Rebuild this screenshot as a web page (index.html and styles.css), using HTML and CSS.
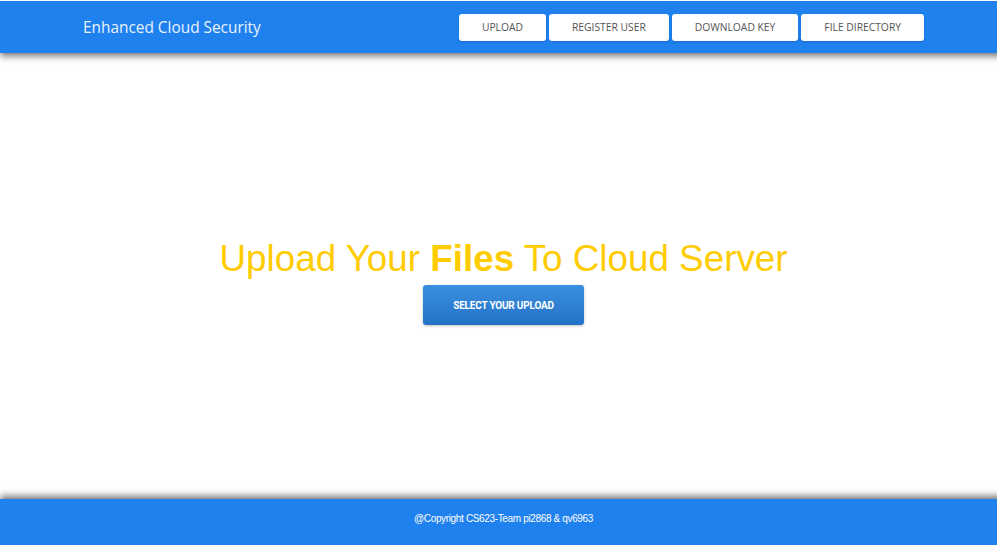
FILE: index.html
```html
<!DOCTYPE html>
<html lang="en">
<head>
<meta charset="utf-8">
<title>Enhanced Cloud Security</title>
<link rel="stylesheet" href="styles.css">
</head>
<body>
<div class="page">
  <header class="topbar">
    <div class="brand">Enhanced Cloud Security</div>
    <nav class="nav">
      <a class="nav-btn" href="#">Upload</a>
      <a class="nav-btn" href="#">Register User</a>
      <a class="nav-btn" href="#">Download Key</a>
      <a class="nav-btn" href="#">File Directory</a>
    </nav>
  </header>
  <main class="hero">
    <h1 class="hero-title">Upload Your <b>Files</b> To Cloud Server</h1>
    <button class="select-btn" type="button">SELECT YOUR UPLOAD</button>
  </main>
  <footer class="footer">@Copyright CS623-Team pi2868 &amp; qv6963</footer>
</div>
</body>
</html>
```
FILE: styles.css
```css
* { box-sizing: border-box; }
html, body { margin: 0; padding: 0; background: #fff; overflow: hidden; }
body { padding-top: 1px; }
.page {
  width: 1007px;
  height: 544px;
  display: flex;
  flex-direction: column;
  overflow: hidden;
}
.topbar {
  position: relative;
  z-index: 2;
  height: 52px;
  flex: none;
  background: #1f81ee;
  box-shadow: 0 3px 7px rgba(0,0,0,0.55);
  display: flex;
  align-items: center;
  justify-content: space-between;
  padding: 0 83px;
}
.brand {
  font-family: "Open Sans", sans-serif;
  font-size: 15.4px;
  color: #eaf2fd;
}
.nav { display: flex; gap: 3px; }
.nav-btn {
  display: flex;
  align-items: center;
  height: 27px;
  padding: 0 23px;
  background: #fff;
  border-radius: 3px;
  color: #555;
  font-family: "Open Sans", sans-serif;
  font-size: 10.3px;
  text-transform: uppercase;
  text-decoration: none;
  box-shadow: 0 1px 2px rgba(0,0,0,0.15);
}
.hero {
  flex: 1;
  display: flex;
  flex-direction: column;
  align-items: center;
  justify-content: center;
  padding-top: 12px;
}
.hero-title {
  margin: 0;
  font-family: "Liberation Sans", Arial, sans-serif;
  font-size: 36.8px;
  line-height: 40px;
  font-weight: normal;
  color: #ffcc00;
}
.hero-title b { font-weight: bold; }
.select-btn {
  margin-top: 6px;
  width: 161px;
  height: 40px;
  border: none;
  border-radius: 3px;
  background: linear-gradient(#3b8fdf, #2372c8);
  box-shadow: 0 1px 3px rgba(0,0,0,0.25);
  color: #fff;
  font-family: Roboto, "Liberation Sans", sans-serif;
  font-weight: bold;
  font-size: 10px;
  letter-spacing: -0.2px;
  padding: 0;
}
.footer {
  position: relative;
  z-index: 2;
  height: 46px;
  flex: none;
  background: #1f81ee;
  box-shadow: 0 -3px 7px rgba(0,0,0,0.55);
  color: #fff;
  text-align: center;
  font-family: "Liberation Sans", Arial, sans-serif;
  font-size: 10px;
  letter-spacing: -0.35px;
  line-height: 16px;
  padding-top: 12px;
}
```
